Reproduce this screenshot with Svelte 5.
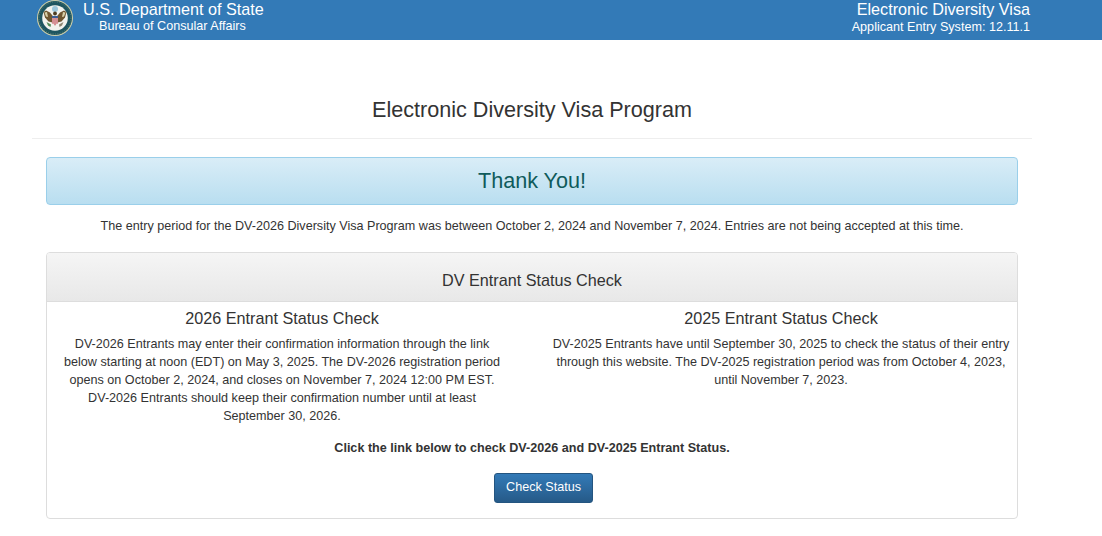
<script lang="ts">
	const columns = [
		{
			title: '2026 Entrant Status Check',
			body: [
				'DV-2026 Entrants may enter their confirmation information through the link below starting at noon (EDT) on May 3, 2025. The DV-2026 registration period opens on October 2, 2024, and closes on November 7, 2024 12:00 PM EST.',
				'DV-2026 Entrants should keep their confirmation number until at least September 30, 2026.'
			]
		},
		{
			title: '2025 Entrant Status Check',
			body: [
				'DV-2025 Entrants have until September 30, 2025 to check the status of their entry through this website. The DV-2025 registration period was from October 4, 2023, until November 7, 2023.'
			]
		}
	];
</script>

<header class="topbar">
	<div class="brand">
		<svg class="seal" viewBox="0 0 36 36" width="36" height="36" aria-hidden="true">
			<circle cx="18" cy="18" r="18" fill="#cfcfa8" />
			<circle cx="18" cy="18" r="17" fill="#1d5560" />
			<circle cx="18" cy="18" r="16" fill="none" stroke="#7f9a8a" stroke-width="0.6" stroke-dasharray="1 1.4" />
			<circle cx="18" cy="18" r="12.800" fill="#f2f3ee" />
			<circle cx="18" cy="9" r="3" fill="#9cc6da" />
			<path d="M6.500 12 L9 10.500 L13 12.500 L15.800 16 L15.500 22.500 L11.500 21.500 L8 17.500 Z" fill="#6f5631" />
			<path d="M29.500 12 L27 10.500 L23 12.500 L20.200 16 L20.500 22.500 L24.500 21.500 L28 17.500 Z" fill="#6f5631" />
			<path d="M7.500 12.500 L10 12 L11 17 L9 16.500 Z" fill="#d8cfa8" />
			<path d="M28.500 12.500 L26 12 L25 17 L27 16.500 Z" fill="#d8cfa8" />
			<circle cx="18" cy="13.500" r="1.900" fill="#4d3c22" />
			<path d="M15 16 H21 V21 Q21 24 18 25.500 Q15 24 15 21 Z" fill="#e9e6e2" />
			<path d="M16 18 V23.800 M18 18 V25.300 M20 18 V23.800" stroke="#c23a46" stroke-width="1" />
			<path d="M15 16 H21 V18 H15 Z" fill="#3d5f96" />
			<path d="M9.500 22 L14 24.500 L13.500 27 L11 25.500 Z" fill="#4f8a55" />
			<path d="M26.500 22 L22 24.500 L22.500 27 L25 25.500 Z" fill="#8b8470" />
		</svg>
		<div class="stack">
			<span class="big">U.S. Department of State</span>
			<span class="small sub">Bureau of Consular Affairs</span>
		</div>
	</div>
	<div class="stack right">
		<span class="big">Electronic Diversity Visa</span>
		<span class="small">Applicant Entry System: 12.11.1</span>
	</div>
</header>

<main class="page">
	<h1>Electronic Diversity Visa Program</h1>
	<hr />
	<div class="content">
		<div class="thanks">Thank You!</div>
		<p class="notice">The entry period for the DV-2026 Diversity Visa Program was between October 2, 2024 and November 7, 2024. Entries are not being accepted at this time.</p>
		<section class="panel">
			<div class="panel-heading">DV Entrant Status Check</div>
			<div class="panel-body">
				<div class="cols">
					{#each columns as col}
						<div class="col">
							<h2>{col.title}</h2>
							{#each col.body as line}
								<p>{line}</p>
							{/each}
						</div>
					{/each}
				</div>
				<p class="cta">Click the link below to check DV-2026 and DV-2025 Entrant Status.</p>
				<button class="btn" type="button">Check Status</button>
			</div>
		</section>
	</div>
</main>

<style>
	:global(body) {
		font-family: 'Liberation Sans', Arial, sans-serif;
		font-size: 12.6px;
		line-height: 18px;
		color: #333;
		background: #fff;
	}
	.topbar {
		height: 40px;
		background: #337ab7;
		color: #fff;
		display: flex;
		justify-content: space-between;
		padding: 0 72px 0 37px;
		overflow: hidden;
	}
	.brand {
		display: flex;
		gap: 10px;
	}
	.seal {
		display: block;
	}
	.stack {
		display: flex;
		flex-direction: column;
	}
	.big {
		font-size: 16.2px;
		line-height: 18px;
	}
	.small {
		font-size: 12.6px;
		line-height: 16px;
	}
	.sub {
		padding-left: 16px;
	}
	.right {
		align-items: flex-end;
		gap: 1px;
	}
	.page {
		width: 1000px;
		margin-left: 32px;
	}
	h1 {
		margin: 0;
		padding-top: 57px;
		font-size: 21.6px;
		line-height: 26px;
		font-weight: 400;
		text-align: center;
	}
	hr {
		margin: 15px 0 0;
		border: 0;
		border-top: 1px solid #eee;
	}
	.content {
		padding: 18px 14px 0;
	}
	.thanks {
		height: 48px;
		box-sizing: border-box;
		border: 1px solid #9acfea;
		border-radius: 4px;
		background: linear-gradient(to bottom, #d9edf7, #b9def0);
		color: #0f5b5b;
		font-size: 21.6px;
		line-height: 46px;
		text-align: center;
	}
	.notice {
		margin: 12px 0 17px;
		text-align: center;
	}
	.panel {
		border: 1px solid #ddd;
		border-radius: 4px;
	}
	.panel-heading {
		height: 48px;
		border-bottom: 1px solid #ddd;
		border-radius: 3px 3px 0 0;
		background: linear-gradient(to bottom, #f5f5f5, #e8e8e8);
		font-size: 16.2px;
		line-height: 55px;
		text-align: center;
	}
	.panel-body {
		padding: 7px 0 15px;
		text-align: center;
	}
	.cols {
		display: grid;
		grid-template-columns: 450px 1fr;
		gap: 38px;
		padding-left: 10px;
	}
	h2 {
		margin: 0 0 8px;
		font-size: 16.2px;
		line-height: 18px;
		font-weight: 400;
	}
	.col p {
		margin: 0;
	}
	.cta {
		margin: 14px 0 16px;
		font-weight: 700;
	}
	.btn {
		display: inline-block;
		width: 99px;
		height: 30px;
		margin-left: 23px;
		padding: 0 0 2px;
		border: 1px solid #245580;
		border-radius: 3px;
		background: linear-gradient(to bottom, #337ab7, #265a88);
		color: #fff;
		font: inherit;
	}
</style>
